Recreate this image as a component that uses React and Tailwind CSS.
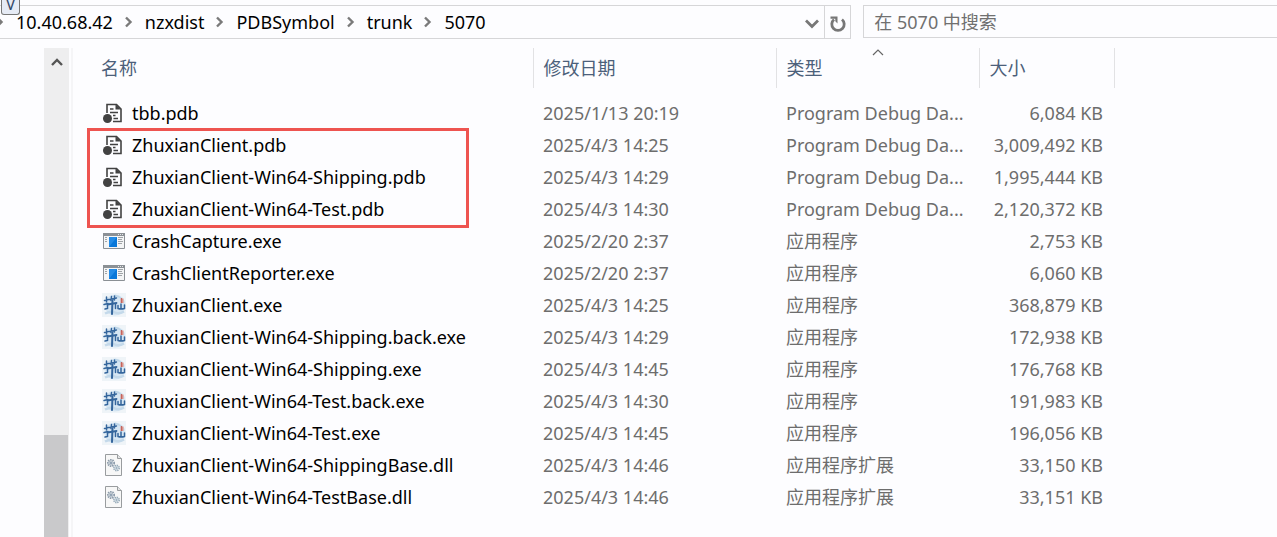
import React from "react";

const crumbs = ["10.40.68.42", "nzxdist", "PDBSymbol", "trunk", "5070"];

const PDB = "Program Debug Da...";
const APP = "应用程序";
const DLL = "应用程序扩展";

const files = [
  ["pdb", "tbb.pdb", "2025/1/13 20:19", PDB, "6,084 KB"],
  ["pdb", "ZhuxianClient.pdb", "2025/4/3 14:25", PDB, "3,009,492 KB"],
  ["pdb", "ZhuxianClient-Win64-Shipping.pdb", "2025/4/3 14:29", PDB, "1,995,444 KB"],
  ["pdb", "ZhuxianClient-Win64-Test.pdb", "2025/4/3 14:30", PDB, "2,120,372 KB"],
  ["exe", "CrashCapture.exe", "2025/2/20 2:37", APP, "2,753 KB"],
  ["exe", "CrashClientReporter.exe", "2025/2/20 2:37", APP, "6,060 KB"],
  ["game", "ZhuxianClient.exe", "2025/4/3 14:25", APP, "368,879 KB"],
  ["game", "ZhuxianClient-Win64-Shipping.back.exe", "2025/4/3 14:29", APP, "172,938 KB"],
  ["game", "ZhuxianClient-Win64-Shipping.exe", "2025/4/3 14:45", APP, "176,768 KB"],
  ["game", "ZhuxianClient-Win64-Test.back.exe", "2025/4/3 14:30", APP, "191,983 KB"],
  ["game", "ZhuxianClient-Win64-Test.exe", "2025/4/3 14:45", APP, "196,056 KB"],
  ["dll", "ZhuxianClient-Win64-ShippingBase.dll", "2025/4/3 14:46", DLL, "33,150 KB"],
  ["dll", "ZhuxianClient-Win64-TestBase.dll", "2025/4/3 14:46", DLL, "33,151 KB"],
];

function PdbIcon() {
  return (
    <svg viewBox="0 0 24 24" className="size-6" fill="none" aria-hidden="true">
      <path d="M5 12V3.500H14.500L19 8V20.500H11" stroke="#424242" strokeWidth="1.600" />
      <path d="M13.500 3v5.500h5.500z" fill="#424242" />
      <path d="M8 8h3.500M8 11.500h8M11 14.500h2.500M11.500 17.500h4.500" stroke="#424242" strokeWidth="1.400" />
      <circle cx="5.500" cy="17.500" r="4.500" fill="#424242" />
    </svg>
  );
}

function ExeIcon() {
  return (
    <svg viewBox="0 0 24 24" className="size-6" aria-hidden="true">
      <path d="M1.500 4.500h21v15h-21z" fill="#f4f5f6" stroke="#8b9095" />
      <path d="M1 4h22v3H1z" fill="#8b9095" />
      <path d="M16 5.500h1m1 0h1m1 0h1" stroke="#e5e7e9" />
      <path d="M7 8h8v10H7z" fill="#0877d9" />
      <path d="M7 18 15 8H7z" fill="#238be6" />
      <path d="M3 8.500h2M3 10.500h2M3 12.500h2M16 8.500h5M16 10.500h4M16 12.500h5M16 14.500h4" stroke="#a0a4a8" />
    </svg>
  );
}

function GameIcon() {
  return (
    <svg viewBox="0 0 24 24" className="size-6" fill="none" aria-hidden="true">
      <path d="M0 0h24v24H0z" fill="#eff4f8" />
      <circle cx="13" cy="12" r="10.500" fill="#d6e6f3" />
      <path d="M3 20.500q6-3 10-1t9-1" stroke="#c4d9ea" strokeWidth="2.500" />
      <path d="M13 2.500q6 1 8 6" stroke="#bcd5e8" strokeWidth="1.500" />
      <g stroke="#34659c" strokeLinecap="round">
        <path d="m2.500 7.500 4-1M4.500 4v5M2 11.500l4-1" strokeWidth="1.500" />
        <path d="m7.500 6.500 7-1.500M9.500 3.500l-.5 4M12.500 3v4" strokeWidth="1.500" />
        <path d="m5.500 11.500 9-1.500" strokeWidth="1.800" />
        <path d="M10.500 7.500 10 21" strokeWidth="2" />
        <path d="M5.500 11.500v4l-2.500.5M13.500 11v4.500" strokeWidth="1.500" />
        <path d="M16 12.500v3q3 1 6.500 0V12M19 11v4" strokeWidth="1.500" />
      </g>
      <path d="M18.500 5.500h3v4.500h-3z" fill="#dc9288" />
      <path d="M19.500 5v5" stroke="#c3635d" />
    </svg>
  );
}

function DllIcon() {
  return (
    <svg viewBox="0 0 24 24" className="size-6" fill="none" aria-hidden="true">
      <path d="M3.500 1.500h12l4 4v17h-16z" fill="#f7f7f7" stroke="#999c9f" />
      <path d="M15.500 1.500v4h4" fill="#e4e5e6" stroke="#999c9f" />
      <circle cx="9" cy="10" r="3.200" stroke="#8c9baa" strokeWidth="1.700" strokeDasharray="1.500 .8" />
      <circle cx="9" cy="10" r="2.100" fill="#dce3ea" stroke="#a1aebb" />
      <circle cx="9" cy="10" r=".9" fill="#72879b" />
      <circle cx="14.500" cy="15" r="2.700" stroke="#8fa5b5" strokeWidth="1.500" strokeDasharray="1.300 .8" />
      <circle cx="14.500" cy="15" r="1.700" fill="#e4edf2" stroke="#a8b9c5" strokeWidth=".8" />
      <circle cx="14.500" cy="15" r=".7" fill="#7993a5" />
    </svg>
  );
}

const icons = { pdb: PdbIcon, exe: ExeIcon, game: GameIcon, dll: DllIcon };

function CrumbArrow() {
  return (
    <svg viewBox="0 0 8 12" className="h-3 w-2 shrink-0" fill="none" stroke="#7a7a7a" strokeWidth="2.400" aria-hidden="true">
      <path d="m1 1.500 4.500 4.500L1 10.500" />
    </svg>
  );
}

function AddressBar() {
  return (
    <div className="flex h-[34px] w-2/3 border-y border-r border-[#d6d6d8]">
      <nav aria-label="Path" className="-ml-1 flex min-w-0 flex-1 items-center gap-3 text-black">
        {crumbs.map((crumb) => (
          <React.Fragment key={crumb}>
            <CrumbArrow />
            <a href="#" className="whitespace-nowrap">{crumb}</a>
          </React.Fragment>
        ))}
      </nav>
      <button aria-label="Recent locations" className="flex w-6 items-center justify-center">
        <svg viewBox="0 0 14 10" className="mt-1 h-[10px] w-[14px]" fill="none" stroke="#777" strokeWidth="2.800">
          <path d="m1 1.500 6 6 6-6" />
        </svg>
      </button>
      <button aria-label="Refresh" className="flex w-[26px] items-center justify-center border-l border-[#d6d6d8]">
        <svg viewBox="0 0 18 18" className="mt-1 size-[18px]" fill="none">
          <path d="M5 4.500A6.200 6.200 0 1 0 13 4.500" stroke="#777" strokeWidth="2.800" />
          <path d="M1.500 1.500H8.500V8.500L6.300 6.300V3.700H1.500z" fill="#777" />
        </svg>
      </button>
    </div>
  );
}

function ScrollBar() {
  return (
    <div className="flex w-[25px] flex-col bg-[#eeeeef]">
      <button aria-label="Scroll up" className="flex h-7 items-center justify-center">
        <svg viewBox="0 0 12 10" className="h-[10px] w-3" fill="none" stroke="#555" strokeWidth="2.400">
          <path d="m1 8 5-5 5 5" />
        </svg>
      </button>
      <div className="h-[359px]" />
      <div className="mr-px flex-1 bg-[#c9c9cb]" />
    </div>
  );
}

function FileTable() {
  return (
    <table className="w-[1024px] table-fixed border-collapse text-left text-[#6d6d6d]">
      <colgroup>
        <col className="w-[443px]" />
        <col className="w-[243px]" />
        <col className="w-[203px]" />
        <col className="w-[135px]" />
      </colgroup>
      <thead className="text-[#4c607a]">
        <tr className="h-10">
          <th scope="col" className="border-r border-[#e2e2e4] pl-[11px] font-normal">名称</th>
          <th scope="col" className="border-r border-[#e2e2e4] pl-[10px] font-normal">修改日期</th>
          <th scope="col" className="relative border-r border-[#e2e2e4] pl-[10px] font-normal">
            类型
            <svg viewBox="0 0 12 7" className="absolute left-1/2 top-px h-[7px] w-3 -translate-x-1/2" fill="none" stroke="#666" strokeWidth="1.200" aria-hidden="true">
              <path d="m1 6 5-5 5 5" />
            </svg>
          </th>
          <th scope="col" className="border-r border-[#e2e2e4] pl-[10px] font-normal">大小</th>
        </tr>
      </thead>
      <tbody className="before:block before:h-[9px] before:content-['']">
        {files.map(([kind, name, date, type, size]) => {
          const Icon = icons[kind];
          return (
            <tr key={name} className="h-8">
              <td className="p-0 pl-3 text-black">
                <div className="flex items-center gap-1.5 whitespace-nowrap">
                  <Icon />
                  {name}
                </div>
              </td>
              <td className="whitespace-nowrap p-0 pl-[10px]">{date}</td>
              <td className="whitespace-nowrap p-0 pl-[10px]">{type}</td>
              <td className="whitespace-nowrap p-0 pr-[11px] text-right">{size}</td>
            </tr>
          );
        })}
      </tbody>
    </table>
  );
}

export default function App() {
  return (
    <div className="relative flex h-screen flex-col overflow-hidden bg-[#fdfdff] pt-[5px] font-['Noto_Sans','Noto_Sans_CJK_SC',sans-serif] text-[18px] leading-6">
      <header className="flex gap-3">
        <AddressBar />
        <label className="flex h-[33px] min-w-0 flex-1 border-y border-l border-[#d6d6d8]">
          <input
            type="search"
            aria-label="在 5070 中搜索"
            placeholder="在 5070 中搜索"
            className="w-full bg-transparent px-[10px] outline-none placeholder:text-[#707070]"
          />
        </label>
      </header>
      <div className="absolute left-px top-0 flex h-[15px] w-[19px] items-end justify-center rounded-b-[3px] border border-t-0 border-[#777] bg-[#e6ebf5] text-[16px] leading-5 text-[#34496b]">
        V
      </div>
      <main className="mt-[9px] flex min-h-0 flex-1 pl-11">
        <ScrollBar />
        <div className="ml-[2px] w-[2px] bg-[#f5f5f7]" />
        <div className="relative min-w-0 flex-1 pl-[17px]">
          <FileTable />
          <div className="pointer-events-none absolute left-[14px] top-20 h-[100px] w-[382px] border-3 border-[#ee5450]" />
        </div>
      </main>
    </div>
  );
}
